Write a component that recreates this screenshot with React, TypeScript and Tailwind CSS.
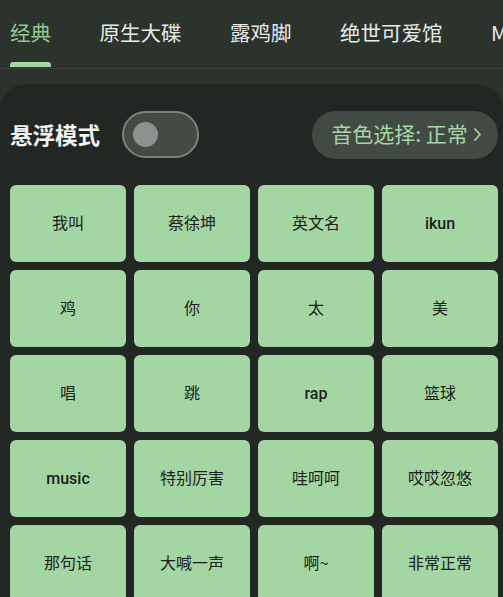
const tabs = ['经典', '原生大碟', '露鸡脚', '绝世可爱馆', 'MC'];

const sounds = [
  '我叫', '蔡徐坤', '英文名', 'ikun',
  '鸡', '你', '太', '美',
  '唱', '跳', 'rap', '篮球',
  'music', '特别厉害', '哇呵呵', '哎哎忽悠',
  '那句话', '大喊一声', '啊~', '非常正常',
];

const latin = /^[a-z]+$/;

export default function App() {
  return (
    <div
      className="h-[597px] w-[503px] overflow-hidden bg-[#2c332d]"
      style={{ fontFamily: '"Noto Sans CJK SC", "Noto Sans", sans-serif' }}
    >
      {/* tab bar */}
      <div className="relative h-[84px]">
        <div className="flex h-[68px] items-center gap-[48.5px] whitespace-nowrap pl-[10px] pb-[4px]">
          {tabs.map((t, i) => (
            <div key={t} className="relative flex h-full items-center">
              <span
                className={
                  i === 0
                    ? 'text-[20.5px] leading-none text-[#8fc98f]'
                    : 'text-[20.5px] leading-none text-[#e8ebe8]'
                }
              >
                {t}
              </span>
              {i === 0 && (
                <div className="absolute bottom-[-3px] left-0 h-[5px] w-full rounded-t-[3px] bg-[#a3d6a3]" />
              )}
            </div>
          ))}
        </div>
        <div className="h-px bg-[#3d3b38]" />
      </div>

      {/* panel */}
      <div className="h-full rounded-t-[26px] bg-[#222723] pl-[10px] pr-[5px]">
        <div className="flex h-[101px] items-center justify-between">
          <div className="flex items-center gap-[22px]">
            <span className="text-[22.5px] font-bold leading-none text-[#f2f4f2]">悬浮模式</span>
            <div className="flex h-[47px] w-[77px] items-center rounded-full border-[2px] border-[#7c817c] bg-[#444b45] pl-[9px]">
              <div className="size-[25px] rounded-full bg-[#8e918e]" />
            </div>
          </div>
          <div className="flex h-[48px] w-[186px] items-center justify-center gap-[5px] rounded-full bg-[#434a43] pl-[3px]">
            <span className="pb-[2px] text-[21px] leading-none text-[#a3d6a3]">音色选择: 正常</span>
            <svg width="9" height="15" viewBox="0 0 9 15" fill="none">
              <path d="M2 2l5 5.5L2 13" stroke="#a3d6a3" strokeWidth="1.8" strokeLinecap="round" strokeLinejoin="round" />
            </svg>
          </div>
        </div>

        <div className="grid grid-cols-4 gap-[8px]">
          {sounds.map((s) => (
            <div
              key={s}
              className={
                latin.test(s)
                  ? 'flex h-[77px] items-center justify-center rounded-[6px] bg-[#a3d6a3] font-["Roboto",sans-serif] text-[16px] font-medium leading-none text-[#1c211c]'
                  : 'flex h-[77px] items-center justify-center rounded-[6px] bg-[#a3d6a3] pb-[3px] text-[16px] leading-none text-[#1c211c]'
              }
            >
              {s}
            </div>
          ))}
        </div>
      </div>
    </div>
  );
}
